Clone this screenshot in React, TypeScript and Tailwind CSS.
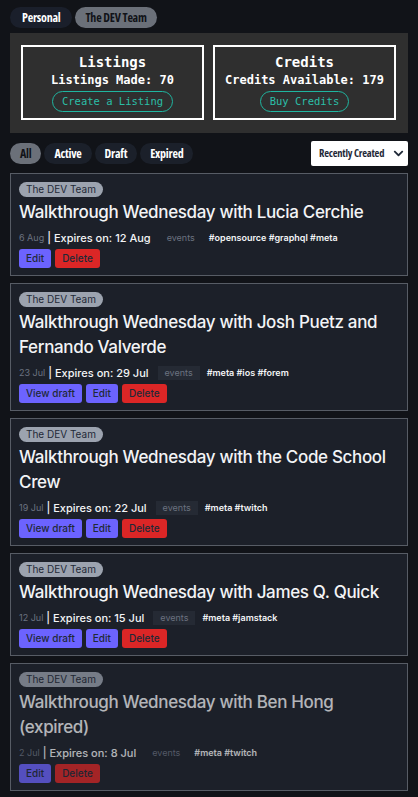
import { FaChevronDown } from "react-icons/fa";

const listings = [
  {
    title: "Walkthrough Wednesday with Lucia Cerchie",
    created: "6 Aug",
    expires: "12 Aug",
    tags: "#opensource #graphql #meta",
    draft: false,
    expired: false,
  },
  {
    title: "Walkthrough Wednesday with Josh Puetz and Fernando Valverde",
    created: "23 Jul",
    expires: "29 Jul",
    tags: "#meta #ios #forem",
    draft: true,
    expired: false,
  },
  {
    title: "Walkthrough Wednesday with the Code School Crew",
    created: "19 Jul",
    expires: "22 Jul",
    tags: "#meta #twitch",
    draft: true,
    expired: false,
  },
  {
    title: "Walkthrough Wednesday with James Q. Quick",
    created: "12 Jul",
    expires: "15 Jul",
    tags: "#meta #jamstack",
    draft: true,
    expired: false,
  },
  {
    title: "Walkthrough Wednesday with Ben Hong (expired)",
    created: "2 Jul",
    expires: "8 Jul",
    tags: "#meta #twitch",
    draft: false,
    expired: true,
  },
  {
    title: "Walkthrough Wednesday with Ben Hong",
    created: "1 Jul",
    expires: "8 Jul",
    tags: "#meta #twitch",
    draft: false,
    expired: false,
  },
];

const narrow =
  "font-['Open_Sans','Roboto',sans-serif] font-bold font-stretch-[78%] tracking-[-0.02em] whitespace-nowrap";

const ListingCard = ({ item }: { item: (typeof listings)[number] }) => {
  return (
    <div className="border border-[#575c65] bg-[#1c2029] px-2 pt-2 pb-[7px]">
      <div className={item.expired ? "opacity-70" : ""}>
        <div className="flex">
          <span className="rounded-full bg-[#9ca3af] px-[7px] text-[10px] leading-[15px] text-[#1f2937]">
            The DEV Team
          </span>
        </div>
        <h2 className="mt-[3px] text-[17px] font-medium leading-[25px] tracking-[-0.02em] text-[#f3f4f6]">
          {item.title}
        </h2>
        <div className="mt-[6px] flex h-[14px] items-center whitespace-nowrap text-[#f3f4f6]">
          <span className="text-[9px] text-[#6b7280]">{item.created}</span>
          <span className="ml-[3px] text-[11px] font-medium">
            | Expires on: {item.expires}
          </span>
          <span
            className={`ml-[9px] px-[7px] text-[9px] leading-[14px] text-[#6b7280] ${
              item.draft ? "bg-[#252a34]" : ""
            }`}
          >
            events
          </span>
          <span className="ml-[7px] text-[9px] font-semibold">{item.tags}</span>
        </div>
        <div className="mt-[4px] flex gap-1 text-[10px] font-medium text-[#1f2937]">
          {item.draft && (
            <button className="h-[19px] rounded-[3px] bg-[#6c63ff] px-[7px]">
              View draft
            </button>
          )}
          <button className="h-[19px] rounded-[3px] bg-[#6c63ff] px-[7px]">
            Edit
          </button>
          <button className="h-[19px] rounded-[3px] bg-[#dc2626] px-[7px]">
            Delete
          </button>
        </div>
      </div>
    </div>
  );
};

const App = () => {
  return (
    <div className="min-h-screen bg-[#111318] px-[10px] pt-[7px] font-['Inter',sans-serif]">
      <div className={`flex gap-[3px] text-[12px] ${narrow}`}>
        <button className="h-[21px] rounded-full bg-[#1a1f2b] px-[12px] text-white">
          Personal
        </button>
        <button className="h-[21px] rounded-full bg-[#6b7079] px-[10px] text-[#111318]">
          The DEV Team
        </button>
      </div>

      <div className="mt-[5px] flex gap-[9px] bg-[#2f2f2f] pt-[12px] pr-[12px] pb-[13px] pl-[11px] font-['DejaVu_Sans_Mono',monospace] font-bold text-white">
        <div className="flex h-[75px] flex-1 flex-col items-center border-2 border-white pt-[5px]">
          <div className="text-[14px] leading-[20px]">Listings</div>
          <div className="text-[12px] leading-[16px]">Listings Made: 70</div>
          <button className="mt-[3px] h-[21px] rounded-full border border-[#1fb5a0] px-[9px] text-[10.5px] font-normal text-[#2bbfa8]">
            Create a Listing
          </button>
        </div>
        <div className="flex h-[75px] flex-1 flex-col items-center border-2 border-white pt-[5px]">
          <div className="text-[14px] leading-[20px]">Credits</div>
          <div className="text-[12px] leading-[16px]">Credits Available: 179</div>
          <button className="mt-[3px] h-[21px] rounded-full border border-[#1fb5a0] px-[9px] text-[10.5px] font-normal text-[#2bbfa8]">
            Buy Credits
          </button>
        </div>
      </div>

      <div className="mt-[8px] flex items-center justify-between">
        <div className={`flex gap-[3px] text-[12px] ${narrow}`}>
          <button className="h-[21px] rounded-full bg-[#6b7079] px-[10px] text-[#111318]">
            All
          </button>
          <button className="h-[21px] rounded-full bg-[#1b202a] px-[10px] text-white">
            Active
          </button>
          <button className="h-[21px] rounded-full bg-[#1b202a] px-[10px] text-white">
            Draft
          </button>
          <button className="h-[21px] rounded-full bg-[#1b202a] px-[10px] text-white">
            Expired
          </button>
        </div>
        <div
          className={`flex h-[25px] w-[97px] items-center justify-between rounded-[2px] bg-white pr-[4px] pl-[8px] text-[10.5px] text-[#1f2937] ${narrow}`}
        >
          <span>Recently Created</span>
          <FaChevronDown className="text-[11px]" />
        </div>
      </div>

      <div className="mt-[7px] flex flex-col gap-[7px]">
        {listings.map((item, i) => (
          <ListingCard key={i} item={item} />
        ))}
      </div>
    </div>
  );
};

export default App;
